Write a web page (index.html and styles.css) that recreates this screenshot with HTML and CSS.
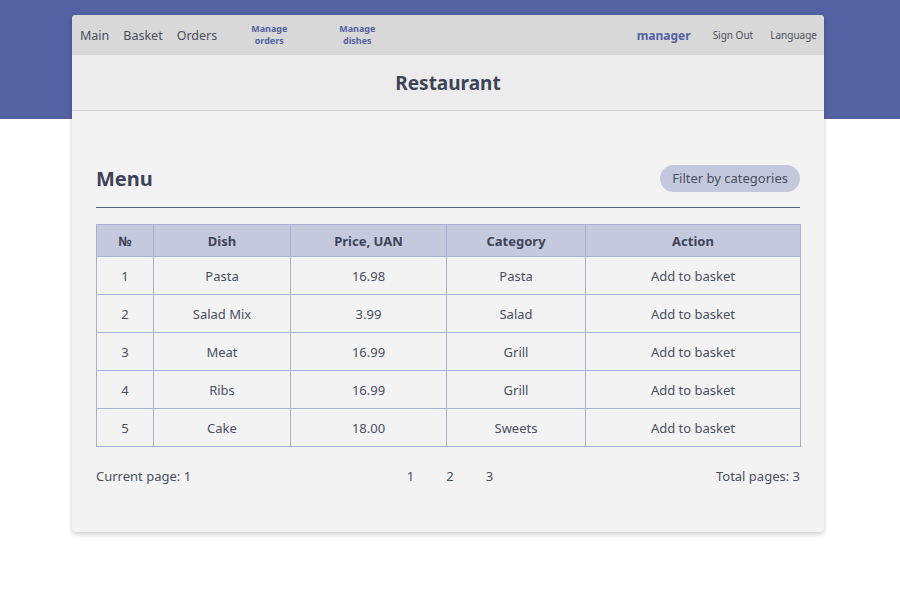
FILE: index.html
```html
<!DOCTYPE html>
<html>
<head>
<meta charset="utf-8">
<link rel="stylesheet" href="styles.css">
</head>
<body>
<div class="band"></div>
<div class="card">
  <nav class="nav">
    <div class="nav-left">
      <a class="nav-link">Main</a>
      <a class="nav-link">Basket</a>
      <a class="nav-link">Orders</a>
    </div>
    <div class="nav-manage">
      <a class="manage">Manage<br>orders</a>
      <a class="manage">Manage<br>dishes</a>
    </div>
    <div class="nav-right">
      <span class="user">manager</span>
      <a class="small-link">Sign Out</a>
      <a class="small-link">Language</a>
    </div>
  </nav>
  <header class="title-bar"><h1 class="title">Restaurant</h1></header>
  <main class="content">
    <div class="menu-head">
      <h2 class="menu-title">Menu</h2>
      <button class="filter">Filter by categories</button>
    </div>
    <hr class="rule">
    <table class="dishes">
      <colgroup>
        <col class="c1"><col class="c2"><col class="c3"><col class="c4"><col class="c5">
      </colgroup>
      <thead>
        <tr><th>№</th><th>Dish</th><th>Price, UAN</th><th>Category</th><th>Action</th></tr>
      </thead>
      <tbody>
        <tr><td>1</td><td>Pasta</td><td>16.98</td><td>Pasta</td><td>Add to basket</td></tr>
        <tr><td>2</td><td>Salad Mix</td><td>3.99</td><td>Salad</td><td>Add to basket</td></tr>
        <tr><td>3</td><td>Meat</td><td>16.99</td><td>Grill</td><td>Add to basket</td></tr>
        <tr><td>4</td><td>Ribs</td><td>16.99</td><td>Grill</td><td>Add to basket</td></tr>
        <tr><td>5</td><td>Cake</td><td>18.00</td><td>Sweets</td><td>Add to basket</td></tr>
      </tbody>
    </table>
    <div class="pager">
      <span class="pager-left">Current page: 1</span>
      <span class="pages"><a>1</a><a>2</a><a>3</a></span>
      <span class="pager-right">Total pages: 3</span>
    </div>
  </main>
</div>
</body>
</html>
```

FILE: styles.css
```css
* { box-sizing: border-box; }
html, body { margin: 0; padding: 0; }
body {
  background: #ffffff;
  font-family: "Noto Sans", "Open Sans", sans-serif;
  color: #4a4f60;
  position: relative;
  min-height: 600px;
}
.band {
  height: 119px;
  background: #5262a2;
}
.card {
  position: absolute;
  top: 15px;
  left: 72px;
  width: 752px;
  background: #f3f3f3;
  border-radius: 4px;
  box-shadow: 0 2px 5px rgba(0,0,0,0.22);
  overflow: hidden;
}
.nav {
  height: 40px;
  background: #d8d8d8;
  display: flex;
  align-items: center;
  padding: 0 7px 0 8px;
}
.nav-left { display: flex; gap: 14px; }
.nav-link {
  font-size: 12.5px;
  color: #4a4f60;
}
.nav-manage { display: flex; margin-left: 8px; }
.manage {
  width: 88px;
  text-align: center;
  font-size: 9px;
  line-height: 12.5px;
  font-weight: 700;
  color: #5262a2;
}
.nav-right {
  margin-left: auto;
  display: flex;
  align-items: center;
  gap: 17px;
}
.user {
  font-size: 12px;
  font-weight: 700;
  color: #5262a2;
  margin-right: 5px;
}
.small-link {
  font-size: 10px;
  color: #4a4f60;
}
.title-bar {
  height: 56px;
  background: #ececec;
  border-bottom: 1px solid #d4d4d4;
  display: flex;
  align-items: center;
  justify-content: center;
}
.title {
  margin: 0;
  font-size: 19px;
  font-weight: 700;
  color: #3e4457;
}
.content { padding: 53px 24px 47px; }
.menu-head {
  display: flex;
  align-items: center;
  justify-content: space-between;
  height: 28px;
}
.menu-title {
  margin: 0;
  font-size: 20px;
  font-weight: 700;
  color: #3e4457;
}
.filter {
  border: none;
  background: #c3c8dc;
  border-radius: 14px;
  height: 27px;
  padding: 0 12px;
  font-family: inherit;
  font-size: 13px;
  color: #4a4f60;
}
.rule {
  margin: 15px 0 16px;
  border: none;
  border-top: 1px solid #5a5f7e;
  height: 0;
}
.dishes {
  width: 704px;
  border-collapse: collapse;
  table-layout: fixed;
  font-size: 13px;
}
.c1 { width: 57px; }
.c2 { width: 137px; }
.c3 { width: 156px; }
.c4 { width: 139px; }
.c5 { width: 215px; }
.dishes th, .dishes td {
  border: 1px solid #a9b0d2;
  text-align: center;
  padding: 0;
}
.dishes th {
  background: #c4c9de;
  height: 32px;
  font-weight: 700;
  color: #3e4457;
}
.dishes td {
  height: 38px;
  color: #4a4f60;
}
.pager {
  margin-top: 20px;
  display: grid;
  grid-template-columns: 1fr auto 1fr;
  align-items: center;
  font-size: 13px;
}
.pages { display: flex; gap: 32px; padding-left: 4px; }
.pager-right { text-align: right; }
```
